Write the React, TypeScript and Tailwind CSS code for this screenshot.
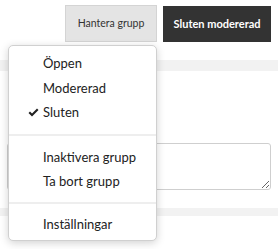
import React from "react";

export default function App() {
  const font = { fontFamily: "Lato, 'Open Sans', sans-serif" };
  return (
    <div className="relative w-[278px] h-[249px] bg-white overflow-hidden" style={font}>
      <div className="flex justify-end gap-[6px] pr-[7px] pt-[5px]">
        <button className="h-[37px] w-[92px] border border-[#d4d4d4] bg-[#e4e4e4] text-[#333] text-[10.5px]">
          Hantera grupp
        </button>
        <button className="h-[36px] mt-[1px] w-[108px] bg-[#333333] text-white font-bold text-[11px]">
          Sluten modererad
        </button>
      </div>
      <div className="mt-[18px] h-[11px] bg-[#f2f2f2]" />
      <div className="h-[72px]" />
      <div className="px-[7px]">
        <textarea className="block w-full h-[47px] border border-[#cfcfcf] rounded-[3px] bg-white" />
      </div>
      <div className="mt-[18px] h-[8px] bg-[#f2f2f2]" />

      <div className="absolute left-[8px] top-[45px] w-[149px] h-[196px] bg-white border border-[#d0d0d0] rounded-[5px] shadow-[0_2px_8px_rgba(0,0,0,0.18)] pt-[5px] text-[13px] text-[#222]">
        <div className="h-[24.5px] leading-[24.5px] pl-[34px]">Öppen</div>
        <div className="h-[24.5px] leading-[24.5px] pl-[34px]">Modererad</div>
        <div className="relative h-[24.5px] leading-[24.5px] pl-[34px]">
          <svg className="absolute left-[19px] top-[8px]" width="11" height="9" viewBox="0 0 11 9">
            <path d="M0.5 5 L2 3.5 L4 5.5 L9 0.5 L10.5 2 L4 8.5 Z" fill="#222" />
          </svg>
          Sluten
        </div>
        <div className="mt-[9px] mb-[9px] h-[2px] bg-[#eeeeee]" />
        <div className="h-[24.5px] leading-[24.5px] pl-[34px]">Inaktivera grupp</div>
        <div className="h-[24.5px] leading-[24.5px] pl-[34px]">Ta bort grupp</div>
        <div className="mt-[8px] mb-[8px] h-[2px] bg-[#eeeeee]" />
        <div className="h-[24.5px] leading-[24.5px] pl-[34px]">Inställningar</div>
      </div>
    </div>
  );
}
